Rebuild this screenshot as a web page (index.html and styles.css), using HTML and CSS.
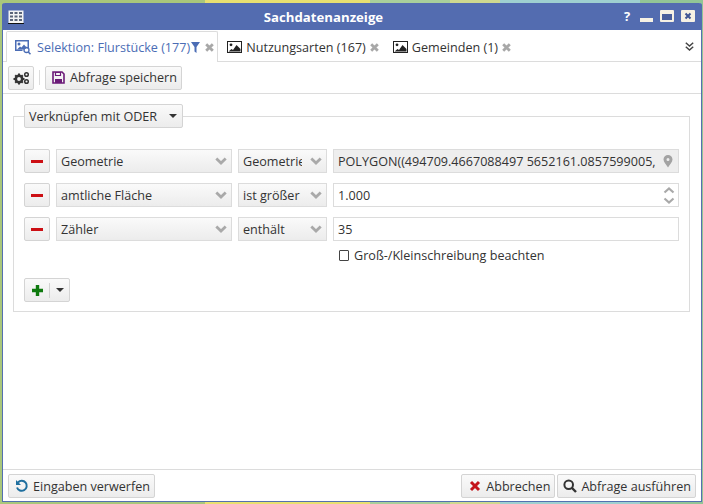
FILE: index.html
```html
<!DOCTYPE html>
<html lang="de">
<head>
<meta charset="utf-8">
<title>Sachdatenanzeige</title>
<link rel="stylesheet" href="styles.css">
</head>
<body>
<div class="window">
  <header class="titlebar">
    <svg class="title-icon" width="16" height="14" viewBox="0 0 16 14"><rect x="0.5" y="0.5" width="15" height="13" fill="#f4f4f4"/><path d="M0 13.5h16" stroke="#111" stroke-width="1"/><path d="M2 2h3v2H2zM6.500 2h3v2h-3zM11 2h3v2h-3zM2 5.500h3v2H2zM6.500 5.500h3v2h-3zM11 5.500h3v2h-3zM2 9h3v2H2zM6.500 9h3v2h-3zM11 9h3v2h-3z" fill="#5a6478"/></svg>
    <span class="title-text">Sachdatenanzeige</span>
    <div class="title-tools">
      <span class="help">?</span>
      <svg width="13" height="13" viewBox="0 0 13 13"><rect x="0" y="8" width="13" height="4" fill="#f6f1e4"/></svg>
      <svg width="14" height="13" viewBox="0 0 14 13"><rect x="0" y="0" width="14" height="12" rx="1" fill="#f6f1e4"/><rect x="2" y="4" width="10" height="6" fill="#4a5f9c"/></svg>
      <svg width="14" height="13" viewBox="0 0 14 13"><rect x="0" y="0" width="14" height="12" rx="1" fill="#f6f1e4"/><path d="M4.500 3.500l5 5M9.500 3.500l-5 5" stroke="#3f5593" stroke-width="2"/></svg>
    </div>
  </header>

  <nav class="tabs">
    <div class="tab tab-active">
      <svg class="tab-icon" width="18" height="16" viewBox="0 0 18 16"><path d="M1 1h14v8.500h-1.500V2.500h-11v8h6v1.500H1z" fill="#4b6db5"/><circle cx="5" cy="5" r="1.500" fill="#4b6db5"/><path d="M3 10.500l3-3 1.500 1 2.500-3 3 3.500-3 1.500z" fill="#4b6db5"/><circle cx="12.500" cy="11" r="2.500" fill="none" stroke="#4b6db5" stroke-width="1.300"/><path d="M14.300 13l2.200 2.200" stroke="#4b6db5" stroke-width="1.600"/></svg>
      <span class="tab-label tab-label-active">Selektion: Flurstücke (177)</span>
      <svg class="filter" width="9" height="11" viewBox="0 0 9 11"><path d="M0 0h9L5.500 5v6L3.500 9.500V5z" fill="#4b6db5"/></svg>
      <svg class="close" width="9" height="9" viewBox="0 0 9 9"><path d="M1.200 1.200l6.600 6.600M7.800 1.200L1.200 7.800" stroke="#a8a8a8" stroke-width="2.800"/></svg>
    </div>
    <div class="tab">
      <svg class="tab-icon-img" width="15" height="13" viewBox="0 0 15 13"><rect x="0.500" y="0.500" width="14" height="11" fill="none" stroke="#222" stroke-width="1"/><circle cx="4" cy="3.800" r="1.400" fill="#222"/><path d="M1.500 10.500l3-2.500 1.500 1 3.500-5 4 4v2.500z" fill="#222"/></svg>
      <span class="tab-label">Nutzungsarten (167)</span>
      <svg class="close" width="9" height="9" viewBox="0 0 9 9"><path d="M1.200 1.200l6.600 6.600M7.800 1.200L1.200 7.800" stroke="#a8a8a8" stroke-width="2.800"/></svg>
    </div>
    <div class="tab">
      <svg class="tab-icon-img" width="15" height="13" viewBox="0 0 15 13"><rect x="0.500" y="0.500" width="14" height="11" fill="none" stroke="#222" stroke-width="1"/><circle cx="4" cy="3.800" r="1.400" fill="#222"/><path d="M1.500 10.500l3-2.500 1.500 1 3.500-5 4 4v2.500z" fill="#222"/></svg>
      <span class="tab-label">Gemeinden (1)</span>
      <svg class="close" width="9" height="9" viewBox="0 0 9 9"><path d="M1.200 1.200l6.600 6.600M7.800 1.200L1.200 7.800" stroke="#a8a8a8" stroke-width="2.800"/></svg>
    </div>
    <svg class="overflow" width="9" height="10" viewBox="0 0 9 10"><path d="M0.800 0.800L4.500 4 8.200 0.800M0.800 4.800L4.500 8 8.200 4.800" fill="none" stroke="#444" stroke-width="1.500"/></svg>
  </nav>

  <div class="toolbar">
    <button class="btn btn-gear" type="button">
      <svg width="17" height="14" viewBox="0 0 17 14"><g fill="none" stroke="#333"><circle cx="6" cy="8" r="3.200" stroke-width="2.600"/><path d="M6 2.500v2M6 11.500v2M.5 8h2M9.500 8h2M2.200 4.200l1.300 1.300M8.500 10.500l1.300 1.300M2.200 11.800l1.300-1.300M8.500 5.500l1.300-1.300" stroke-width="2"/><circle cx="13.500" cy="3.500" r="1.800" stroke-width="1.500"/><circle cx="13.500" cy="10.500" r="1.800" stroke-width="1.500"/></g></svg>
    </button>
    <span class="toolbar-sep"></span>
    <button class="btn" type="button">
      <svg width="14" height="13" viewBox="0 0 14 13"><path d="M1 1h9l2 2v9H1z" fill="none" stroke="#6b1a78" stroke-width="1.600"/><path d="M3.500 1.500h5v3h-5z" fill="none" stroke="#6b1a78" stroke-width="1.200"/><path d="M3 8h7v4H3z" fill="#6b1a78"/></svg>
      <span>Abfrage speichern</span>
    </button>
  </div>

  <main class="content">
    <fieldset class="group">
      <legend class="legend">
        <span class="btn legend-btn">
          <span>Verknüpfen mit ODER</span>
          <span class="divider"></span>
          <span class="caret"></span>
        </span>
      </legend>

      <div class="row">
        <button class="btn btn-icon" type="button"><span class="minus"></span></button>
        <div class="field select-wide grey"><span class="value">Geometrie</span><svg class="chev" width="12" height="8" viewBox="0 0 12 8"><path d="M1.300 1.500L6 6l4.700-4.500" fill="none" stroke="#a9a9a9" stroke-width="2.800"/></svg></div>
        <div class="field select-op grey"><span class="value clip">Geometrie</span><svg class="chev" width="12" height="8" viewBox="0 0 12 8"><path d="M1.300 1.500L6 6l4.700-4.500" fill="none" stroke="#a9a9a9" stroke-width="2.800"/></svg></div>
        <div class="field input grey-flat"><span class="value">POLYGON((494709.4667088497 5652161.0857599005,</span><svg class="pin" width="10" height="13" viewBox="0 0 10 13"><path fill-rule="evenodd" d="M5 0a4.500 4.500 0 0 1 4.500 4.500C9.500 7 6.500 10 5 12.500 3.500 10 .5 7 .5 4.500A4.500 4.500 0 0 1 5 0zm0 3a1.500 1.500 0 1 0 0 3 1.500 1.500 0 0 0 0-3z" fill="#a3a3a3"/></svg></div>
      </div>

      <div class="row">
        <button class="btn btn-icon" type="button"><span class="minus"></span></button>
        <div class="field select-wide grey"><span class="value">amtliche Fläche</span><svg class="chev" width="12" height="8" viewBox="0 0 12 8"><path d="M1.300 1.500L6 6l4.700-4.500" fill="none" stroke="#a9a9a9" stroke-width="2.800"/></svg></div>
        <div class="field select-op grey"><span class="value clip">ist größer</span><svg class="chev" width="12" height="8" viewBox="0 0 12 8"><path d="M1.300 1.500L6 6l4.700-4.500" fill="none" stroke="#a9a9a9" stroke-width="2.800"/></svg></div>
        <div class="field input"><span class="value clip">1.000</span><svg class="spin" width="12" height="19" viewBox="0 0 12 19"><path d="M1.500 6.500L6 2.500l4.500 4M1.500 12.500L6 16.500l4.500-4" fill="none" stroke="#a9a9a9" stroke-width="2.200"/></svg></div>
      </div>

      <div class="row">
        <button class="btn btn-icon" type="button"><span class="minus"></span></button>
        <div class="field select-wide grey"><span class="value">Zähler</span><svg class="chev" width="12" height="8" viewBox="0 0 12 8"><path d="M1.300 1.500L6 6l4.700-4.500" fill="none" stroke="#a9a9a9" stroke-width="2.800"/></svg></div>
        <div class="field select-op grey"><span class="value clip">enthält</span><svg class="chev" width="12" height="8" viewBox="0 0 12 8"><path d="M1.300 1.500L6 6l4.700-4.500" fill="none" stroke="#a9a9a9" stroke-width="2.800"/></svg></div>
        <div class="field input"><span class="value clip">35</span></div>
      </div>

      <div class="case"><span class="box"></span><span>Groß-/Kleinschreibung beachten</span></div>

      <div class="add-row">
        <button class="btn btn-add" type="button">
          <svg width="13" height="13" viewBox="0 0 13 13"><path d="M6.500 1v11M1 6.500h11" stroke="#0f7a0f" stroke-width="3.400"/></svg>
          <span class="divider"></span>
          <span class="caret"></span>
        </button>
      </div>
    </fieldset>
  </main>

  <footer class="footer">
    <button class="btn" type="button">
      <svg width="14" height="14" viewBox="0 0 14 14"><path d="M3 3.500A5 5 0 1 1 2 8.500" fill="none" stroke="#1f6f9f" stroke-width="2"/><path d="M1 1v5h5z" fill="#1f6f9f"/></svg>
      <span>Eingaben verwerfen</span>
    </button>
    <div class="footer-right">
      <button class="btn" type="button">
        <svg width="14" height="12" viewBox="-1 0 14 12"><path d="M2 2l8 8M10 2l-8 8" stroke="#c4141b" stroke-width="3"/></svg>
        <span>Abbrechen</span>
      </button>
      <button class="btn btn-run" type="button">
        <svg width="14" height="14" viewBox="0 0 14 14"><circle cx="5.700" cy="5.700" r="4.300" fill="none" stroke="#333" stroke-width="2"/><path d="M9 9l4 4" stroke="#333" stroke-width="2.400"/></svg>
        <span>Abfrage ausführen</span>
      </button>
    </div>
  </footer>
</div>
</body>
</html>
```

FILE: styles.css
```css
* { box-sizing: border-box; }

html, body { height: 100%; }

body {
  margin: 0;
  padding: 3px 1px 2px 2px;
  overflow: hidden;
  background: linear-gradient(90deg, #a9c77b 0 205px, #e8e070 205px 370px, #a9cf9b 370px 450px, #cfd98f 450px 500px, #9fd0d0 500px 640px, #92c596 640px);
  font-family: "Open Sans", "Noto Sans", sans-serif;
  font-size: 12.6px;
  color: #333;
}

.window {
  height: 499px;
  display: flex;
  flex-direction: column;
  background: #fff;
  border: 1px solid #5470b0;
  border-top: 0;
  border-radius: 3px 3px 0 0;
}

.titlebar {
  height: 27px;
  flex: none;
  display: flex;
  align-items: center;
  background: #536cb0;
  padding: 0 6px;
  margin: 0 -1px;
  border-radius: 3px 3px 0 0;
}

.title-icon { flex: none; }

.title-text {
  flex: 1;
  text-align: center;
  color: #fff;
  font-weight: 700;
  font-size: 13.2px;
  padding-right: 1px;
}

.title-tools {
  display: flex;
  align-items: center;
  gap: 7px;
  margin-right: 1px;
}

.help {
  color: #fff;
  font-weight: 700;
  font-size: 13px;
  width: 9px;
  line-height: 13px;
}

.tabs {
  height: 32px;
  flex: none;
  display: flex;
  align-items: flex-start;
  padding: 1px 0 0 3px;
  border-bottom: 1px solid #dcdcdc;
}

.tab {
  height: 31px;
  display: flex;
  align-items: center;
  padding: 0 4px 0 8px;
  gap: 4px;
  border: 1px solid transparent;
  border-bottom: 0;
}

.tab-active {
  height: 31px;
  padding: 0 3px 0 7px;
  gap: 0;
  background: #fff;
  border-color: #dcdcdc;
  border-radius: 2px 2px 0 0;
}

.tab-icon { margin-right: 5px; }

.tab-label { white-space: nowrap; color: #333; }

.tab-label-active { color: #4b6db5; }

.filter { margin: 0 5px 0 1px; }

.close { flex: none; }

.overflow { margin: 11px 7px 0 auto; }

.toolbar {
  height: 32px;
  flex: none;
  display: flex;
  align-items: center;
  gap: 5px;
  padding: 0 5px;
  border-bottom: 1px solid #dcdcdc;
}

.toolbar-sep {
  width: 1px;
  height: 15px;
  background: #dcdcdc;
}

.btn {
  display: inline-flex;
  align-items: center;
  gap: 4px;
  height: 24px;
  padding: 0 4px 0 6px;
  border: 1px solid #d4d4d4;
  border-radius: 2px;
  background: linear-gradient(#fafafa, #ececec);
  font: inherit;
  color: #333;
  white-space: nowrap;
}

.btn-gear { width: 26px; padding: 0 0 0 4px; }

.btn-run { padding-left: 5px; }

.content {
  flex: 1;
  min-height: 0;
  padding: 10px 11px 0 10px;
}

.group {
  margin: 0;
  padding: 21px 10px 9px 10px;
  border: 1px solid #dcdcdc;
  min-width: 0;
}

.legend { padding: 0; margin: 0; height: 24px; }

.legend-btn { padding: 0 5px 0 4px; gap: 5px; width: 159px; }

.divider {
  width: 1px;
  height: 15px;
  background: #d2d2d2;
}

.caret {
  width: 0;
  height: 0;
  border-left: 4px solid transparent;
  border-right: 4px solid transparent;
  border-top: 4px solid #333;
  margin-left: 2px;
}

.row {
  display: flex;
  gap: 6px;
  height: 24px;
  margin-bottom: 10px;
}

.btn-icon {
  width: 26px;
  flex: none;
  padding: 0;
  justify-content: center;
}

.minus {
  width: 12px;
  height: 3px;
  background: #cc0f14;
}

.field {
  display: flex;
  align-items: center;
  height: 24px;
  padding: 0 4px 0 4px;
  border: 1px solid #dcdcdc;
  min-width: 0;
}

.grey { background: linear-gradient(#fafafa, #ececec); }

.grey-flat { background: #eee; }

.select-wide { width: 176px; flex: none; }

.select-op { width: 89px; flex: none; }

.input { flex: 1; }

.value {
  flex: 1;
  min-width: 0;
  white-space: nowrap;
}

.clip { overflow: hidden; }

.chev { flex: none; margin-left: 8px; }

.pin { flex: none; margin: 0 1px 0 0; }

.spin { flex: none; margin-right: -1px; }

.case {
  display: flex;
  align-items: center;
  gap: 5px;
  margin: -5px 0 0 315px;
  height: 18px;
}

.box {
  width: 10px;
  height: 11px;
  border: 1px solid #444;
  border-radius: 1px;
}

.add-row { margin-top: 14px; }

.btn-add {
  width: 46px;
  padding: 0 0 0 6px;
  gap: 5px;
}

.btn-add .caret { margin-left: 1px; }

.footer {
  height: 32px;
  flex: none;
  display: flex;
  justify-content: space-between;
  align-items: flex-start;
  padding: 4px 5px 0;
  border-top: 1px solid #dcdcdc;
}

.footer-right { display: flex; gap: 2px; }
```
